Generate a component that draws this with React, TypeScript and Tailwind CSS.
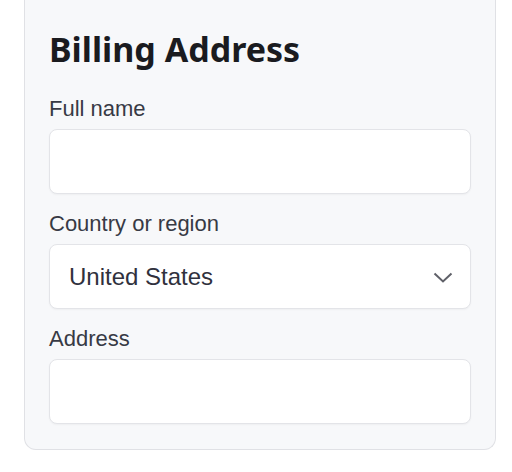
import { useState } from "react";

const COUNTRIES = ["United States", "Canada", "United Kingdom", "Germany", "France", "Japan"];

function Field({ label, children }: { label: string; children: React.ReactNode }) {
  return (
    <label className="flex flex-col">
      <span className="mb-[5px] text-[22px] leading-[30px] text-[#373a45]">{label}</span>
      {children}
    </label>
  );
}

export default function App() {
  const [name, setName] = useState("");
  const [country, setCountry] = useState("United States");
  const [address, setAddress] = useState("");

  const inputCls =
    "h-[65px] w-full rounded-[8px] border border-[#e3e4e8] bg-white px-[19px] text-[22px] text-[#30313d] shadow-[0_1px_2px_rgba(0,0,0,0.04)] outline-none";

  return (
    <div className="min-h-screen bg-white font-['Liberation_Sans',Arial,sans-serif]">
      <div className="ml-[24px] w-[472px] rounded-b-[12px] border-x border-b border-[#e0e1e5] bg-[#f7f8fa] px-6 pt-[29px] pb-[25px]">
        <h1 className="mb-[25px] font-['Noto_Sans',sans-serif] text-[34px] font-bold leading-[40px] text-[#1a1b1f]">
          Billing Address
        </h1>
        <div className="flex flex-col gap-[15px]">
          <Field label="Full name">
            <input value={name} onChange={(e) => setName(e.target.value)} className={inputCls} />
          </Field>
          <Field label="Country or region">
            <div className="relative">
              <select
                value={country}
                onChange={(e) => setCountry(e.target.value)}
                className={inputCls + " appearance-none pr-12 text-[24px]"}
              >
                {COUNTRIES.map((c) => (
                  <option key={c}>{c}</option>
                ))}
              </select>
              <svg
                width="20"
                height="11"
                viewBox="0 0 20 11"
                className="pointer-events-none absolute right-[18px] top-[28px]"
              >
                <polyline points="1.5,1.5 10,9.5 18.5,1.5" fill="none" stroke="#5f6068" strokeWidth="2" />
              </svg>
            </div>
          </Field>
          <Field label="Address">
            <input value={address} onChange={(e) => setAddress(e.target.value)} className={inputCls} />
          </Field>
        </div>
      </div>
    </div>
  );
}
